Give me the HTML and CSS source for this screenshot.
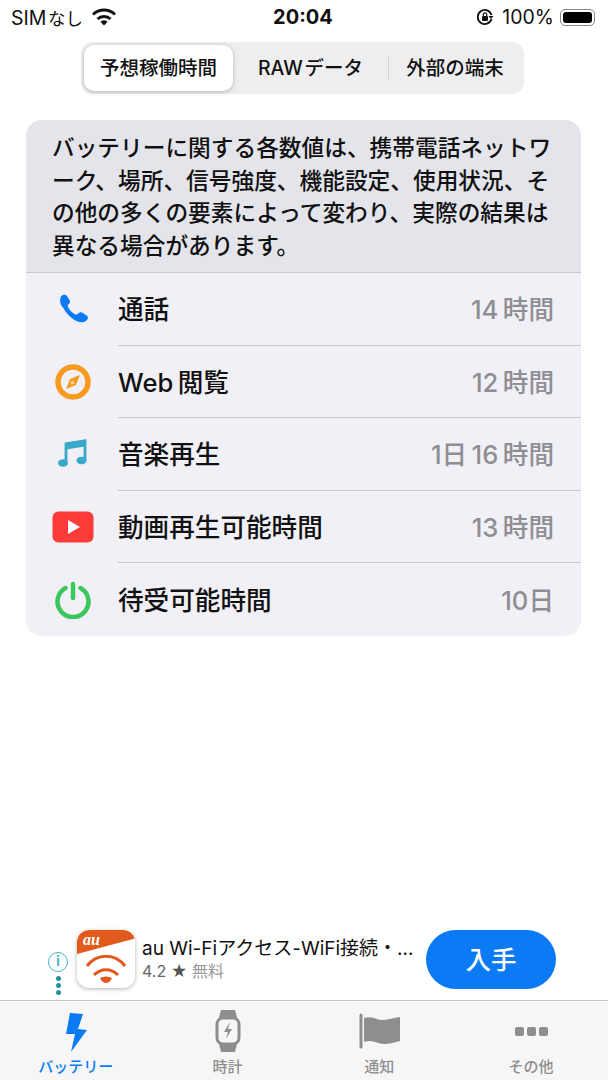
FILE: index.html
```html
<!DOCTYPE html>
<html lang="ja">
<head>
    <meta charset="UTF-8">
    <meta name="viewport" content="width=device-width, initial-scale=1.0">
    <title>予想稼働時間</title>
    <link rel="stylesheet" href="styles.css">
</head>
<body>
    <div class="screen">
        <div class="status">
            <div class="status-left">
                <span>SIM<span class="status-jp">&#8202;なし</span></span>
                <svg class="wifi" viewBox="0 0 24 18" width="24" height="18">
                    <path d="M1 6.500a16 16 0 0 1 22 0" fill="none" stroke="#111" stroke-width="3"/>
                    <path d="M5.500 11a9.500 9.500 0 0 1 13 0" fill="none" stroke="#111" stroke-width="3"/>
                    <path d="M12 17.500l-3.600-3.800a5 5 0 0 1 7.200 0z" fill="#111"/>
                </svg>
            </div>
            <div class="status-time">20:04</div>
            <div class="status-right">
                <svg class="status-lock" viewBox="0 0 18 18" width="18" height="18">
                    <path d="M15.500 11a7 7 0 1 1 0-4" fill="none" stroke="#111" stroke-width="1.800"/>
                    <path d="M17.500 8h-5l2.500 3z" fill="#111"/>
                    <rect x="6" y="8" width="6" height="5" rx="1" fill="#111"/>
                    <path d="M7.300 8V6.500a1.700 1.700 0 0 1 3.400 0V8" fill="none" stroke="#111" stroke-width="1.200"/>
                </svg>
                <span>100%</span>
                <div class="battery"><div class="battery-fill"></div></div>
            </div>
        </div>

        <div class="segments">
            <div class="segment active">予想稼働時間</div>
            <div class="segment segment-raw">RAW&#8202;データ</div>
            <div class="segment-line"></div>
            <div class="segment">外部の端末</div>
        </div>

        <div class="card">
            <p class="card-head">バッテリーに関する各数値は、携帯電話ネットワーク、場所、信号強度、機能設定、使用状況、その他の多くの要素によって変わり、実際の結果は異なる場合があります。</p>
            <div class="row">
                <div class="row-icon">
                    <svg viewBox="0 0 36 36" width="36" height="36">
                        <path d="M6 5.500c1.500-2 4-2.500 5.500-1l3 4.500c1 1.500.5 3-1 4.300-1 .9-1 2 0 3.700 1.500 2.500 3.500 4.600 6 6 1.500.8 2.600.8 3.500-.2 1.300-1.500 3-2 4.500-1l4.500 3c1.500 1 1.300 3.200-.5 4.700-2.500 2.300-6 2.500-10 .5-5.500-2.700-10.500-7.800-13.500-13.500C5 14 4.500 8.500 6 5.500z" fill="#0a7bf5"/>
                    </svg>
                </div>
                <div class="row-body"><span>通話</span><span class="row-value">14&#8201;時間</span></div>
            </div>
            <div class="row">
                <div class="row-icon">
                    <svg viewBox="0 0 36 36" width="36" height="36">
                        <circle cx="18" cy="18" r="15" fill="none" stroke="#f79a20" stroke-width="5.500"/>
                        <path d="M25 11l-4 10-10 4 4-10z" fill="#f79a20"/>
                        <path d="M15.500 20.500l1.500-4 3 3z" fill="#f9d9a8"/>
                    </svg>
                </div>
                <div class="row-body"><span>Web&#8201;閲覧</span><span class="row-value">12&#8201;時間</span></div>
            </div>
            <div class="row">
                <div class="row-icon">
                    <svg viewBox="0 0 36 36" width="36" height="36">
                        <path d="M11 27V8l19-3v20" fill="none" stroke="#38a9c8" stroke-width="2.800"/>
                        <path d="M11 6.500l19-3v7l-19 3z" fill="#38a9c8"/>
                        <ellipse cx="8" cy="27" rx="5" ry="3.800" fill="#38a9c8"/>
                        <ellipse cx="26.500" cy="24.500" rx="5" ry="3.800" fill="#38a9c8"/>
                    </svg>
                </div>
                <div class="row-body"><span>音楽再生</span><span class="row-value">1日&#8201;16&#8201;時間</span></div>
            </div>
            <div class="row">
                <div class="row-icon">
                    <svg viewBox="0 0 42 32" width="42" height="32">
                        <rect x="0.500" y="0.500" width="41" height="31" rx="6" fill="#fb3c3a"/>
                        <path d="M16 9l12 7-12 7z" fill="#fff"/>
                    </svg>
                </div>
                <div class="row-body"><span>動画再生可能時間</span><span class="row-value">13&#8201;時間</span></div>
            </div>
            <div class="row">
                <div class="row-icon">
                    <svg viewBox="0 0 38 38" width="38" height="38">
                        <path d="M11.500 7a15.500 15.500 0 1 0 15 0" fill="none" stroke="#3cc65e" stroke-width="4.500" stroke-linecap="round"/>
                        <path d="M19 3v14" fill="none" stroke="#3cc65e" stroke-width="4.500" stroke-linecap="round"/>
                    </svg>
                </div>
                <div class="row-body"><span>待受可能時間</span><span class="row-value">10日</span></div>
            </div>
        </div>

        <div class="spacer"></div>

        <div class="ad">
            <div class="ad-marks">
                <div class="ad-info">i</div>
                <div class="ad-dots"><i></i><i></i><i></i></div>
            </div>
            <div class="ad-logo">
                <svg viewBox="0 0 58 58" width="58" height="58">
                    <path d="M0 24V12A12 12 0 0 1 12 0h46v8.500z" fill="#e2591c"/>
                    <text x="6" y="15" class="ad-logo-text">au</text>
                    <path d="M10 36c10-13 28-13 38 0" fill="none" stroke="#e2591c" stroke-width="3"/>
                    <path d="M17 45c7-7 17-7 24 0" fill="none" stroke="#e2591c" stroke-width="3"/>
                    <path d="M23 48c4-2 8-2 12 0-1 3-4 5-6 5s-5-2-6-5z" fill="#e2591c"/>
                </svg>
            </div>
            <div class="ad-text">
                <div class="ad-title">au Wi-Fiアクセス-WiFi接続・…</div>
                <div class="ad-meta">4.2 <span class="ad-star">★</span> <span class="ad-price">無料</span></div>
            </div>
            <div class="ad-button">入手</div>
        </div>

        <div class="tabs">
            <div class="tab current">
                <svg viewBox="0 0 32 44" width="32" height="44">
                    <path d="M10 4l13 1-5 15 9 1-16 22 4-18H6z" fill="#0a7bf5"/>
                </svg>
                <span>バッテリー</span>
            </div>
            <div class="tab">
                <svg viewBox="0 0 32 44" width="32" height="44">
                    <path d="M9 1h14l2 8H7zM7 35h18l-2 8H9z" fill="#8e8e8e"/>
                    <rect x="5" y="9" width="22" height="26" rx="6" fill="#f6f6f6" stroke="#8e8e8e" stroke-width="3"/>
                    <path d="M18 13l-6 10h4l-2 7 6-10h-4z" fill="#8e8e8e"/>
                </svg>
                <span>時計</span>
            </div>
            <div class="tab">
                <svg viewBox="0 0 44 44" width="44" height="44">
                    <path d="M4 6v32" fill="none" stroke="#8e8e8e" stroke-width="3" stroke-linecap="round"/>
                    <path d="M7 9c10-3 13 3 20 2 5-.5 9-2 16-3v24c-7 2-11 3-16 3-7 0-11-5-20-2z" fill="#8e8e8e"/>
                </svg>
                <span>通知</span>
            </div>
            <div class="tab">
                <div class="tab-more"><i></i><i></i><i></i></div>
                <span>その他</span>
            </div>
        </div>
    </div>
</body>
</html>
```

FILE: styles.css
```css
* {
    box-sizing: border-box;
}
body {
    margin: 0;
    background-color: #fff;
    color: #111;
    font-family: Inter, 'Noto Sans CJK JP', sans-serif;
}
.screen {
    display: flex;
    flex-direction: column;
    width: 608px;
    height: 1080px;
    overflow: hidden;
}
.status {
    display: grid;
    grid-template-columns: 1fr auto 1fr;
    align-items: center;
    height: 34px;
    padding: 0 13px 0 11px;
    font-size: 19.500px;
}
.status-left {
    display: flex;
    align-items: center;
    gap: 9px;
}
.status-jp {
    font-size: 17.500px;
}
.status-time {
    font-size: 20px;
    font-weight: 700;
}
.status-right {
    display: flex;
    align-items: center;
    justify-content: flex-end;
    gap: 6px;
}
.status-lock {
    margin-right: 2px;
}
.battery {
    width: 35px;
    height: 17px;
    padding: 2px;
    border: 1px solid #888;
    border-radius: 5px;
}
.battery-fill {
    height: 100%;
    background-color: #000;
    border-radius: 3px;
}
.segments {
    display: flex;
    align-items: center;
    align-self: center;
    width: 443px;
    height: 52px;
    margin: 8px 3px 0 0;
    padding: 3px;
    background-color: #eeeef0;
    border-radius: 12px;
    font-size: 19.500px;
    font-weight: 500;
}
.segment {
    flex: 1;
    text-align: center;
    line-height: 46px;
    white-space: nowrap;
}
.segment.active {
    flex: none;
    width: 149px;
    background-color: #fff;
    border-radius: 10px;
    box-shadow: 0 1px 4px rgba(0, 0, 0, 0.25);
}
.segment.segment-raw {
    flex: none;
    width: 155px;
}
.segment-line {
    width: 1px;
    height: 26px;
    background-color: #d5d5d8;
}
.card {
    width: 555px;
    margin: 26px 0 0 26px;
    background-color: #f0f0f6;
    border-radius: 16px;
    overflow: hidden;
}
.card-head {
    height: 153px;
    margin: 0;
    padding: 12px 24px 0 26px;
    background-color: #e4e4eb;
    border-bottom: 1px solid #c8c8cd;
    font-size: 22.700px;
    line-height: 32.700px;
    font-weight: 500;
}
.row {
    display: flex;
    align-items: stretch;
    height: 72.600px;
}
.row-icon {
    display: flex;
    align-items: center;
    justify-content: center;
    flex: none;
    width: 92px;
    padding-left: 2px;
}
.row-body {
    display: flex;
    align-items: center;
    justify-content: space-between;
    flex: 1;
    padding: 0 27px 2px 0;
    border-bottom: 1px solid #c8c8cd;
    font-size: 25.600px;
    font-weight: 500;
}
.row:last-child .row-body {
    border-bottom: none;
}
.row-value {
    color: #8e8e93;
}
.spacer {
    flex: 1;
}
.ad {
    display: flex;
    align-items: center;
    height: 75px;
    padding: 0 52px 7px 48px;
}
.ad-marks {
    display: flex;
    flex-direction: column;
    align-items: center;
    align-self: flex-end;
    gap: 4px;
    width: 20px;
    margin: 0 9px -2px 0;
}
.ad-info {
    width: 20px;
    height: 20px;
    border: 1.500px solid #3fb6c6;
    border-radius: 50%;
    color: #3fb6c6;
    font-size: 13px;
    font-weight: 700;
    line-height: 17px;
    text-align: center;
}
.ad-dots {
    display: flex;
    flex-direction: column;
    gap: 2px;
}
.ad-dots i {
    width: 5px;
    height: 5px;
    background-color: #27929c;
    border-radius: 50%;
}
.ad-logo {
    flex: none;
    width: 58px;
    height: 58px;
    background-color: #fff;
    border-radius: 12px;
    box-shadow: 0 1px 4px rgba(0, 0, 0, 0.3);
    overflow: hidden;
}
.ad-logo-text {
    fill: #fff;
    font-family: 'Liberation Serif', serif;
    font-size: 16px;
    font-style: italic;
    font-weight: 700;
}
.ad-text {
    flex: 1;
    min-width: 0;
    padding-left: 7px;
}
.ad-title {
    font-size: 19px;
    line-height: 24px;
    white-space: nowrap;
    overflow: hidden;
}
.ad-meta {
    color: #666;
    font-size: 16px;
    line-height: 20px;
}
.ad-star {
    color: #555;
}
.ad-price {
    color: #999;
}
.ad-button {
    flex: none;
    width: 130px;
    height: 59px;
    background-color: #0a7bf5;
    border-radius: 30px;
    color: #fff;
    font-size: 25.500px;
    font-weight: 500;
    line-height: 59px;
    text-align: center;
}
.tabs {
    display: flex;
    height: 80px;
    padding-right: 1px;
    background-color: #f6f6f6;
    border-top: 1px solid #c4c4c4;
}
.tab {
    display: flex;
    flex-direction: column;
    align-items: center;
    flex: 1;
    padding-top: 8px;
    color: #8e8e8e;
    font-size: 15px;
    font-weight: 500;
    line-height: 20px;
}
.tab span {
    margin-top: 4px;
}
.tab.current {
    color: #0a7bf5;
}
.tab-more {
    display: flex;
    align-items: center;
    gap: 3px;
    height: 44px;
}
.tab-more i {
    width: 9px;
    height: 9px;
    background-color: #8e8e8e;
    border-radius: 2px;
}
```
